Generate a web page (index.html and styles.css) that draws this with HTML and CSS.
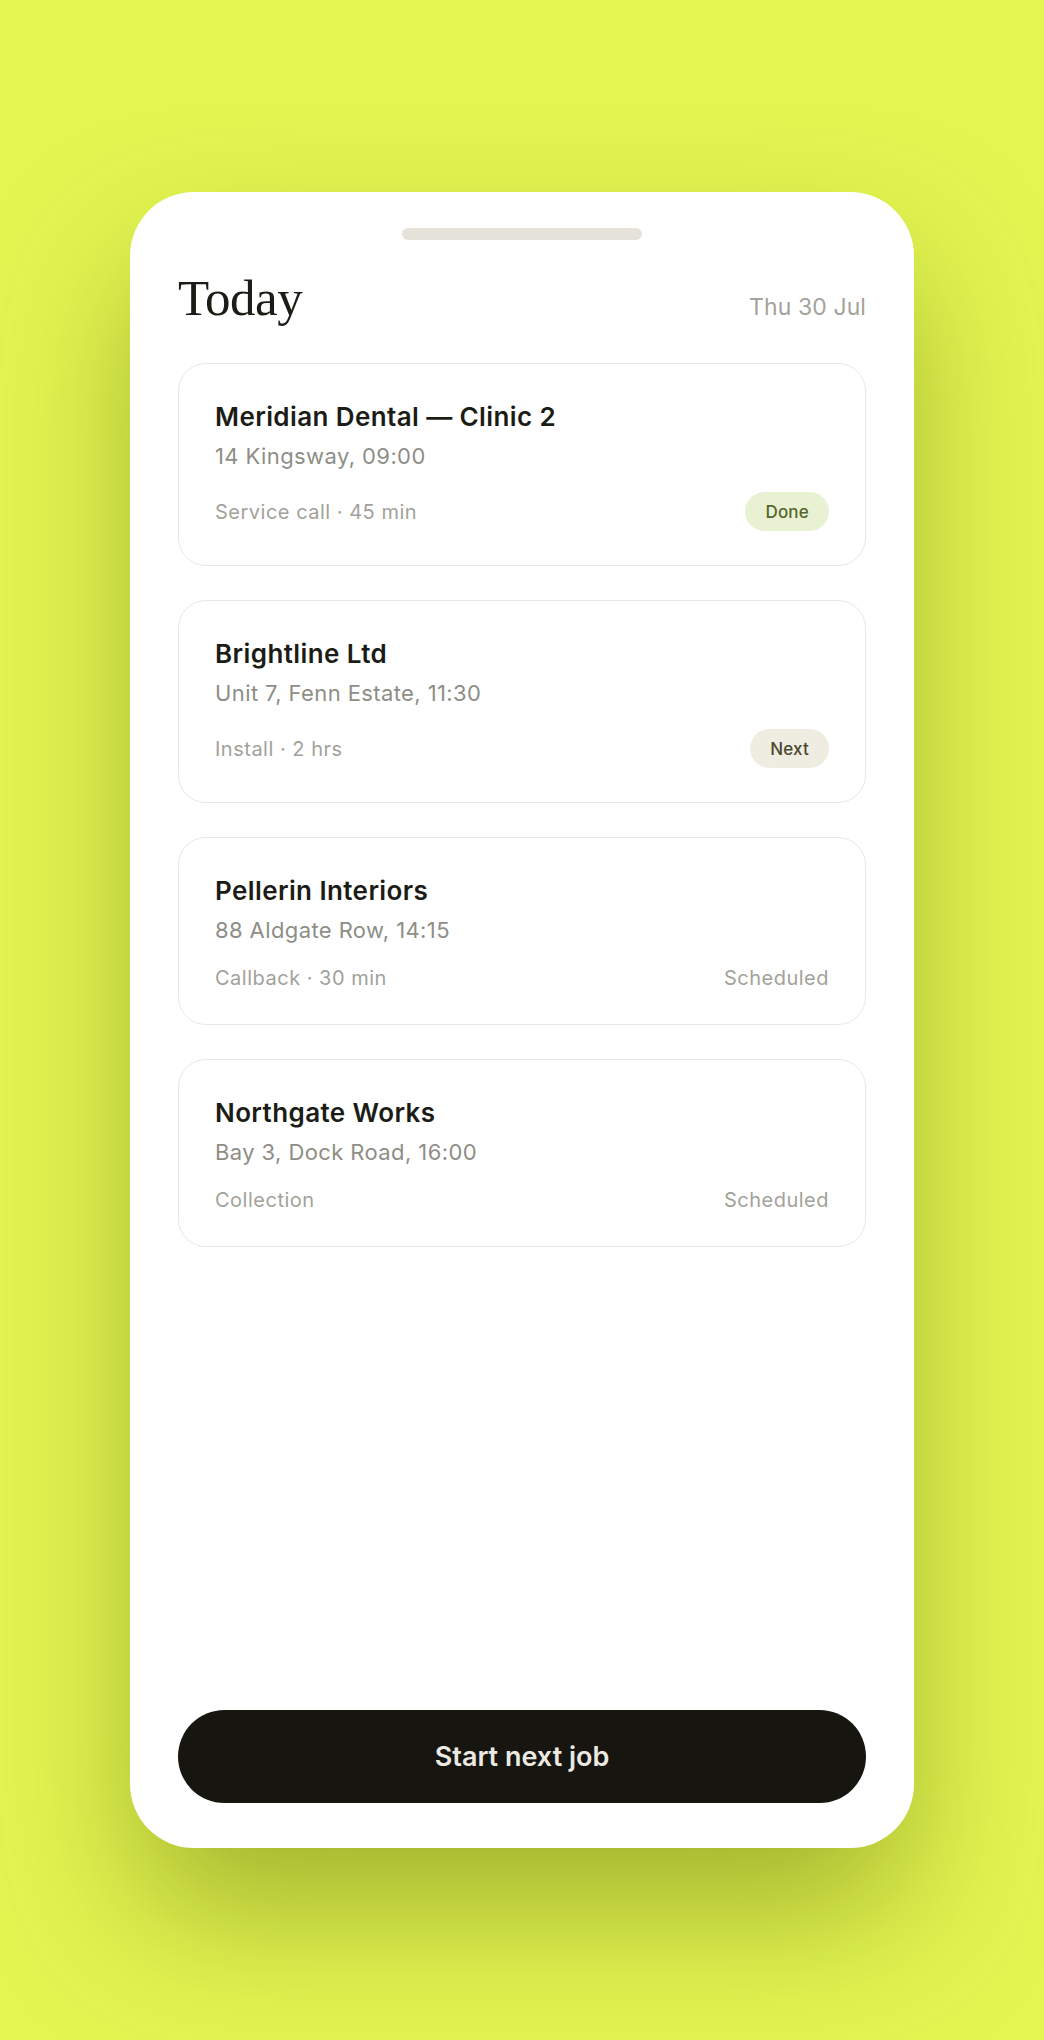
FILE: index.html
```html
<!DOCTYPE html>
<html lang="en">
<head>
<meta charset="utf-8">
<title>Today</title>
<link rel="stylesheet" href="styles.css">
</head>
<body>
<main class="stage">
  <section class="phone">
    <div class="handle"></div>
    <header class="header">
      <h1 class="title">Today</h1>
      <span class="date">Thu 30 Jul</span>
    </header>
    <ul class="jobs">
      <li class="job">
        <h2 class="job-name">Meridian Dental — Clinic 2</h2>
        <p class="job-where">14 Kingsway, 09:00</p>
        <div class="job-meta">
          <span>Service call · 45 min</span>
          <span class="badge badge-done">Done</span>
        </div>
      </li>
      <li class="job">
        <h2 class="job-name">Brightline Ltd</h2>
        <p class="job-where">Unit 7, Fenn Estate, 11:30</p>
        <div class="job-meta">
          <span>Install · 2 hrs</span>
          <span class="badge badge-next">Next</span>
        </div>
      </li>
      <li class="job">
        <h2 class="job-name">Pellerin Interiors</h2>
        <p class="job-where">88 Aldgate Row, 14:15</p>
        <div class="job-meta">
          <span>Callback · 30 min</span>
          <span class="status">Scheduled</span>
        </div>
      </li>
      <li class="job">
        <h2 class="job-name">Northgate Works</h2>
        <p class="job-where">Bay 3, Dock Road, 16:00</p>
        <div class="job-meta">
          <span>Collection</span>
          <span class="status">Scheduled</span>
        </div>
      </li>
    </ul>
    <button class="cta" type="button">Start next job</button>
  </section>
</main>
</body>
</html>
```

FILE: styles.css
```css
* { box-sizing: border-box; }

html, body {
  margin: 0;
  padding: 0;
}

body {
  background: #e3f551;
  font-family: Inter, "Noto Sans", "Liberation Sans", sans-serif;
  color: #1c1c17;
  min-height: 2040px;
}

.stage {
  display: flex;
  justify-content: center;
  padding-top: 192px;
}

.phone {
  width: 784px;
  height: 1656px;
  background: #ffffff;
  border-radius: 64px;
  padding: 36px 48px 45px;
  display: flex;
  flex-direction: column;
  box-shadow: 0 70px 140px -10px rgba(95, 110, 10, 0.5);
}

.handle {
  width: 240px;
  height: 12px;
  border-radius: 6px;
  background: #e5e2da;
  margin: 0 auto;
  flex: none;
}

.header {
  display: flex;
  justify-content: space-between;
  align-items: baseline;
  margin-top: 30px;
}

.title {
  margin: 0;
  font-family: "Liberation Serif", "DejaVu Serif", serif;
  font-weight: 400;
  font-size: 51px;
  line-height: 56px;
  letter-spacing: -0.5px;
  color: #1c1c17;
}

.date {
  font-size: 23px;
  color: #a3a39b;
  letter-spacing: 0.1px;
}

.jobs {
  list-style: none;
  margin: 37px 0 0;
  padding: 0;
  display: flex;
  flex-direction: column;
  gap: 34px;
}

.job {
  border: 1px solid #e9e7e1;
  border-radius: 28px;
  padding: 37px 36px 34px;
}

.job-name {
  margin: 0;
  font-size: 26px;
  line-height: 32px;
  font-weight: 600;
  letter-spacing: 0.4px;
  color: #1c1c17;
}

.job-where {
  margin: 8px 0 0;
  font-size: 22px;
  line-height: 30px;
  color: #8e8e86;
  letter-spacing: 0.4px;
}

.job-meta {
  margin-top: 21px;
  display: flex;
  justify-content: space-between;
  align-items: center;
  font-size: 20px;
  line-height: 24px;
  color: #a2a29a;
  letter-spacing: 0.5px;
}

.badge {
  display: inline-flex;
  align-items: center;
  height: 39px;
  padding: 0 20px;
  border-radius: 20px;
  font-size: 17px;
  font-weight: 500;
  letter-spacing: 0.2px;
}

.badge-done {
  background: #e8f2d2;
  color: #56652c;
}

.badge-next {
  background: #efede1;
  color: #4b4930;
}

.status {
  color: #a2a29a;
}

.cta {
  margin-top: auto;
  height: 93px;
  width: 100%;
  border: 0;
  border-radius: 47px;
  background: #16150f;
  color: #ebe9e1;
  font-family: Inter, "Noto Sans", "Liberation Sans", sans-serif;
  font-size: 27px;
  font-weight: 600;
  letter-spacing: 0;
}
```
